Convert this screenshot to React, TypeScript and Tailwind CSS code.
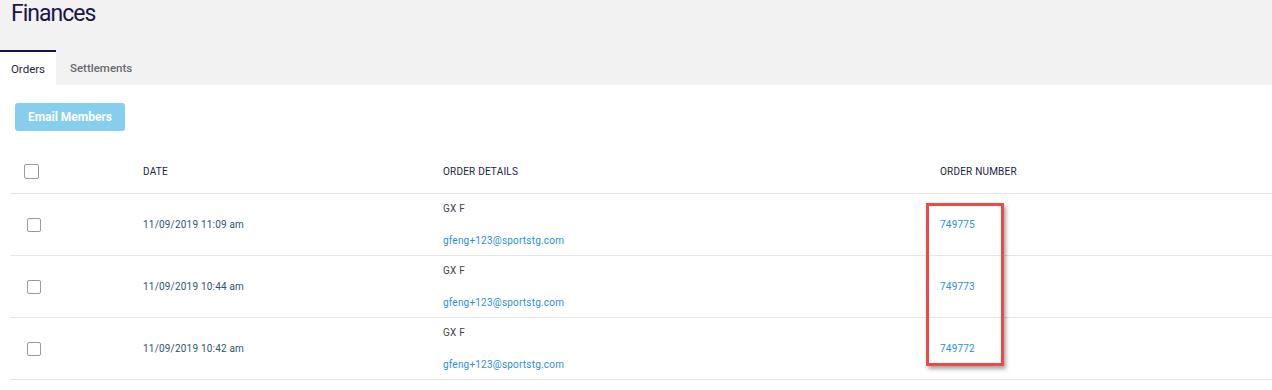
import React from "react";

const orders = [
  { date: "11/09/2019 11:09 am", name: "GX F", email: "gfeng+123@sportstg.com", number: "749775" },
  { date: "11/09/2019 10:44 am", name: "GX F", email: "gfeng+123@sportstg.com", number: "749773" },
  { date: "11/09/2019 10:42 am", name: "GX F", email: "gfeng+123@sportstg.com", number: "749772" },
];

function Box({ size }: { size: "lg" | "sm" }) {
  return (
    <span
      className={`block border border-[#9a9a9a] rounded-[2px] bg-white ${
        size === "lg" ? "w-[15px] h-[15px]" : "w-[14px] h-[14px]"
      }`}
    />
  );
}

export default function App() {
  return (
    <div className="w-[1272px] h-[390px] bg-white font-['Roboto',sans-serif] overflow-hidden">
      {/* Page header */}
      <div className="bg-[#f2f2f2] h-[85px] flex flex-col justify-between">
        <h1 className="pl-[11px] text-[23px] leading-[28px] tracking-[-1px] text-[#1b1548] font-normal">
          Finances
        </h1>
        <div className="flex h-[35px]">
          <div className="w-[56px] pt-[3px] bg-white border-t-2 border-[#16124a] flex items-center justify-center text-[11.5px] text-[#1f1f3a]">
            Orders
          </div>
          <div className="px-[14px] pt-[3px] flex items-center text-[11.5px] text-[#666a70] font-medium">
            Settlements
          </div>
        </div>
      </div>

      {/* Actions */}
      <div className="pl-[15px] pt-[18px]">
        <button className="w-[110px] h-[28px] rounded-[3px] bg-[#86cdee] text-white text-[12px] font-bold">
          Email Members
        </button>
      </div>

      {/* Table */}
      <div className="relative ml-[10px] mt-[18px] tracking-[0.2px]">
        <div className="grid grid-cols-[133px_300px_497px_1fr] h-[45px] items-center border-b border-[#e6e6e6] text-[10px] text-[#22223d]">
          <div className="pl-[14px]">
            <Box size="lg" />
          </div>
          <div>DATE</div>
          <div>ORDER DETAILS</div>
          <div>ORDER NUMBER</div>
        </div>

        {orders.map((o) => (
          <div
            key={o.number}
            className="grid grid-cols-[133px_300px_497px_1fr] h-[62px] border-b border-[#e6e6e6] text-[10px]"
          >
            <div className="pl-[17px] flex items-center">
              <Box size="sm" />
            </div>
            <div className="flex items-center text-[#2f5470]">{o.date}</div>
            <div className="flex flex-col justify-between pt-[8px] pb-[7px] leading-[14px]">
              <span className="text-[#444]">{o.name}</span>
              <span className="text-[#2a8ee0]">{o.email}</span>
            </div>
            <div className="flex items-center text-[#2a8ee0]">{o.number}</div>
          </div>
        ))}

        {/* Highlight annotation */}
        <div className="absolute left-[916px] top-[54px] w-[78px] h-[163px] border-[3px] border-[#f04848] shadow-[2px_3px_4px_rgba(0,0,0,0.35)]" />
      </div>
    </div>
  );
}
